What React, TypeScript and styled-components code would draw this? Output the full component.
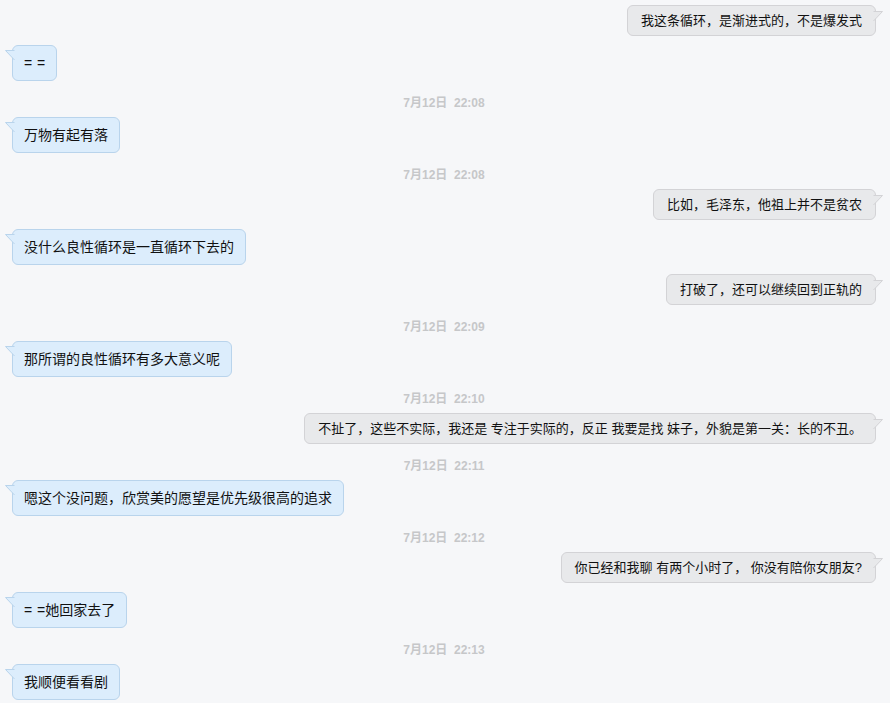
import React from "react";
import styled, { createGlobalStyle } from "styled-components";

const GlobalStyle = createGlobalStyle`
  html, body {
    margin: 0;
    padding: 0;
    background: #f6f7f9;
  }
  body {
    font-family: "Liberation Sans", "Noto Sans CJK SC", sans-serif;
  }
`;

const Page = styled.div`
  width: 890px;
  height: 703px;
  box-sizing: border-box;
  padding: 5px 14px 0 12px;
  display: flex;
  flex-direction: column;
  gap: 9px;
  overflow: hidden;
  background: #f6f7f9;
`;

const Row = styled.div<{ $side: "left" | "right" }>`
  display: flex;
  justify-content: ${(p) => (p.$side === "left" ? "flex-start" : "flex-end")};
`;

const Bubble = styled.div<{ $side: "left" | "right" }>`
  position: relative;
  box-sizing: border-box;
  border: 1px solid ${(p) => (p.$side === "left" ? "#b9d4ec" : "#d3d3d6")};
  background: ${(p) => (p.$side === "left" ? "#dcedfc" : "#e8e9eb")};
  border-radius: 6px;
  color: #111;
  white-space: pre;
  font-family: "Liberation Sans", "Noto Sans CJK SC", sans-serif;
  font-size: ${(p) => (p.$side === "left" ? "14px" : "13px")};
  line-height: ${(p) => (p.$side === "left" ? "18px" : "17px")};
  height: ${(p) => (p.$side === "left" ? "36px" : "31px")};
  padding: ${(p) => (p.$side === "left" ? "8px 11px" : "6px 13px")};
  word-spacing: ${(p) => (p.$side === "left" ? "1px" : "0")};
`;

const Tail = styled.svg<{ $side: "left" | "right" }>`
  position: absolute;
  top: ${(p) => (p.$side === "left" ? "3px" : "4px")};
  ${(p) => (p.$side === "left" ? "left: -8px;" : "right: -8px;")}
  width: 9px;
  height: 12px;
  overflow: visible;
`;

const Stamp = styled.div`
  height: 18px;
  box-sizing: border-box;
  padding-top: 7px;
  text-align: center;
  font-family: "Liberation Sans", "Noto Sans CJK SC", sans-serif;
  font-weight: bold;
  font-size: 12px;
  line-height: 12px;
  color: #c6c7c9;
  white-space: pre;
`;

type Item =
  | { kind: "msg"; side: "left" | "right"; text: string }
  | { kind: "time"; text: string };

const items: Item[] = [
  { kind: "msg", side: "right", text: "我这条循环，是渐进式的，不是爆发式" },
  { kind: "msg", side: "left", text: "= =" },
  { kind: "time", text: "7月12日  22:08" },
  { kind: "msg", side: "left", text: "万物有起有落" },
  { kind: "time", text: "7月12日  22:08" },
  { kind: "msg", side: "right", text: "比如，毛泽东，他祖上并不是贫农" },
  { kind: "msg", side: "left", text: "没什么良性循环是一直循环下去的" },
  { kind: "msg", side: "right", text: "打破了，还可以继续回到正轨的" },
  { kind: "time", text: "7月12日  22:09" },
  { kind: "msg", side: "left", text: "那所谓的良性循环有多大意义呢" },
  { kind: "time", text: "7月12日  22:10" },
  {
    kind: "msg",
    side: "right",
    text: "不扯了，这些不实际，我还是 专注于实际的，反正 我要是找 妹子，外貌是第一关：长的不丑。",
  },
  { kind: "time", text: "7月12日  22:11" },
  { kind: "msg", side: "left", text: "嗯这个没问题，欣赏美的愿望是优先级很高的追求" },
  { kind: "time", text: "7月12日  22:12" },
  { kind: "msg", side: "right", text: "你已经和我聊 有两个小时了， 你没有陪你女朋友?" },
  { kind: "msg", side: "left", text: "= =她回家去了" },
  { kind: "time", text: "7月12日  22:13" },
  { kind: "msg", side: "left", text: "我顺便看看剧" },
];

function BubbleTail({ side }: { side: "left" | "right" }) {
  const fill = side === "left" ? "#dcedfc" : "#e8e9eb";
  const stroke = side === "left" ? "#b9d4ec" : "#d3d3d6";
  const d =
    side === "left" ? "M9.5 1.5 L0.5 1.5 L9.5 11" : "M-0.5 1.5 L8.5 1.5 L-0.5 11";
  return (
    <Tail $side={side} viewBox="0 0 9 12">
      <path d={d} fill={fill} stroke={stroke} strokeWidth={1} strokeLinejoin="miter" />
    </Tail>
  );
}

export default function App() {
  return (
    <>
      <GlobalStyle />
      <Page>
        {items.map((it, i) =>
          it.kind === "time" ? (
            <Stamp key={i}>{it.text}</Stamp>
          ) : (
            <Row key={i} $side={it.side}>
              <Bubble $side={it.side}>
                <BubbleTail side={it.side} />
                {it.text}
              </Bubble>
            </Row>
          )
        )}
      </Page>
    </>
  );
}
